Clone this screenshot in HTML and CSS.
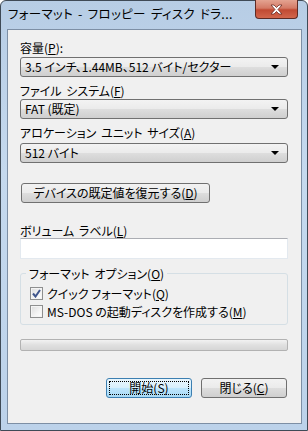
FILE: index.html
```html
<!DOCTYPE html>
<html lang="ja">
<head>
    <meta charset="UTF-8">
    <title>フォーマット - フロッピー ディスク ドライブ</title>
    <link rel="stylesheet" href="styles.css">
</head>
<body>
    <div class="window">
        <div class="titlebar">
            <span class="title">フォーマット - フロッピー ディスク ドラ...</span>
            <span class="close">
                <svg width="15" height="11" viewBox="0 0 15 11">
                    <path d="M2 1 L5 1 L7.5 3.5 L10 1 L13 1 L9 5.5 L13 10 L10 10 L7.5 7.5 L5 10 L2 10 L6 5.5 Z" fill="#fff" stroke="#6b2a22" stroke-width="0.8"/>
                </svg>
            </span>
        </div>
        <div class="client">
            <div class="label l-capacity">容量(<u>P</u>):</div>
            <div class="combo c-capacity"><span>3.5 インチ、1.44MB、512 バイト/セクター</span><i class="arrow"></i></div>

            <div class="label l-fs">ファイル システム(<u>F</u>)</div>
            <div class="combo c-fs"><span>FAT (既定)</span><i class="arrow"></i></div>

            <div class="label l-unit">アロケーション ユニット サイズ(<u>A</u>)</div>
            <div class="combo c-unit"><span>512 バイト</span><i class="arrow"></i></div>

            <div class="button restore">デバイスの既定値を復元する(<u>D</u>)</div>

            <div class="label l-volume">ボリューム ラベル(<u>L</u>)</div>
            <div class="textbox"></div>

            <div class="group">
                <div class="legend">フォーマット オプション(<u>O</u>)</div>
                <div class="check-row quick">
                    <span class="checkbox">
                        <svg width="9" height="9" viewBox="0 0 9 9">
                            <path d="M1 4.5 L3.5 7.5 L8 1" fill="none" stroke="#40568c" stroke-width="2"/>
                        </svg>
                    </span>
                    <span>クイック フォーマット(<u>Q</u>)</span>
                </div>
                <div class="check-row msdos">
                    <span class="checkbox"></span>
                    <span>MS-DOS の起動ディスクを作成する(<u>M</u>)</span>
                </div>
            </div>

            <div class="progress"></div>

            <div class="actions">
                <div class="button default"><span class="focus">開始(S)</span></div>
                <div class="button">閉じる(<u>C</u>)</div>
            </div>
        </div>
    </div>
</body>
</html>
```

FILE: styles.css
```css
body {
    margin: 0;
    font-family: "Noto Sans CJK JP", "Noto Sans", sans-serif;
    font-size: 12px;
    font-feature-settings: "palt";
    color: #000;
    background: #fff;
}

u {
    text-decoration: underline;
    text-underline-offset: 1px;
}

.window {
    width: 308px;
    height: 431px;
    box-sizing: border-box;
    border: 1px solid #3f4a56;
    border-radius: 6px 6px 0 0;
    padding: 0 5px 6px 6px;
    display: flex;
    flex-direction: column;
    background: linear-gradient(to bottom, #b7cde5 0%, #c5d9ee 40%, #bcd2ea 100%);
}

.titlebar {
    height: 28px;
    flex-shrink: 0;
    display: flex;
    align-items: center;
    position: relative;
}

.title {
    font-size: 12.5px;
    line-height: 14px;
    margin-top: -2px;
    margin-left: 1px;
    color: #000;
    letter-spacing: 0.3px;
    word-spacing: 2px;
}

.close {
    position: absolute;
    top: -1px;
    left: 248px;
    width: 43px;
    height: 19px;
    box-sizing: border-box;
    border: 1px solid #5d2b25;
    border-top: none;
    border-radius: 0 0 4px 4px;
    background: linear-gradient(to bottom, #e4a391 0%, #d47a66 45%, #c14a33 55%, #d2664c 100%);
    display: flex;
    align-items: center;
    justify-content: center;
}

.client {
    flex: 1;
    border: 1px solid #7d8fa5;
    background: #f0f0f0;
    padding: 0 13px 0 12px;
    display: flex;
    flex-direction: column;
}

.label {
    line-height: 15px;
    height: 15px;
    white-space: nowrap;
    word-spacing: 2px;
}

.l-capacity { margin-top: 10px; }
.l-fs { margin-top: 6px; }
.l-unit { margin-top: 6px; }
.l-volume { margin-top: 20px; }

.combo {
    height: 20px;
    box-sizing: border-box;
    border: 1px solid #707070;
    border-radius: 3px;
    background: linear-gradient(to bottom, #f3f3f3 0%, #ebebeb 48%, #dddddd 52%, #cfcfcf 100%);
    display: flex;
    align-items: center;
    padding: 0 0 0 4px;
    white-space: nowrap;
}

.combo span {
    flex: 1;
    line-height: 16px;
}

.c-capacity { margin-top: 2px; }
.c-fs { margin-top: 1px; }
.c-unit { margin-top: 3px; }

.arrow {
    width: 0;
    height: 0;
    border-left: 4px solid transparent;
    border-right: 4px solid transparent;
    border-top: 4px solid #000;
    margin-right: 8px;
}

.button {
    height: 20px;
    box-sizing: border-box;
    border: 1px solid #707070;
    border-radius: 3px;
    background: linear-gradient(to bottom, #f2f2f2 0%, #ebebeb 48%, #dddddd 52%, #cfcfcf 100%);
    display: flex;
    align-items: center;
    justify-content: center;
    line-height: 16px;
    white-space: nowrap;
}

.restore {
    width: 189px;
    margin-top: 20px;
    margin-left: 1px;
}

.textbox {
    height: 21px;
    box-sizing: border-box;
    margin-top: 0;
    background: #fff;
    border: 1px solid #e3e9ef;
    border-top-color: #abadb3;
}

.group {
    margin-top: 14px;
    height: 52px;
    box-sizing: border-box;
    border: 1px solid #d5dfe5;
    border-radius: 3px;
    padding: 0 0 0 9px;
    position: relative;
}

.legend {
    position: absolute;
    top: -8px;
    left: 5px;
    padding: 0 3px;
    background: #f0f0f0;
    line-height: 15px;
    word-spacing: 2px;
}

.check-row {
    display: flex;
    align-items: center;
    gap: 4px;
    height: 16px;
    white-space: nowrap;
}

.check-row.quick {
    margin-top: 11px;
}

.check-row.msdos {
    margin-top: 2px;
}

.checkbox {
    width: 13px;
    height: 13px;
    box-sizing: border-box;
    border: 1px solid #8e8f8f;
    background: linear-gradient(135deg, #dcdcdc 0%, #f4f4f4 60%, #fff 100%);
    box-shadow: inset 0 0 0 1px #f4f4f4;
    display: flex;
    align-items: center;
    justify-content: center;
}

.progress {
    margin-top: 14px;
    height: 12px;
    box-sizing: border-box;
    border: 1px solid #b2b2b2;
    border-radius: 2px;
    background: linear-gradient(to bottom, #f2f2f2 0%, #e0e0e0 50%, #d6d6d6 100%);
}

.actions {
    margin-top: 27px;
    display: flex;
    justify-content: flex-end;
    gap: 9px;
    padding-right: 1px;
}

.actions .button {
    width: 86px;
}

.button.default {
    border-color: #3c7fb1;
    background: linear-gradient(to bottom, #eaf6fd 0%, #d9f0fc 48%, #bee6fd 52%, #a7d9f5 100%);
    padding: 2px;
}

.focus {
    flex: 1;
    align-self: stretch;
    display: flex;
    align-items: center;
    justify-content: center;
    outline: 1px dotted #000;
    outline-offset: -1px;
}
```
